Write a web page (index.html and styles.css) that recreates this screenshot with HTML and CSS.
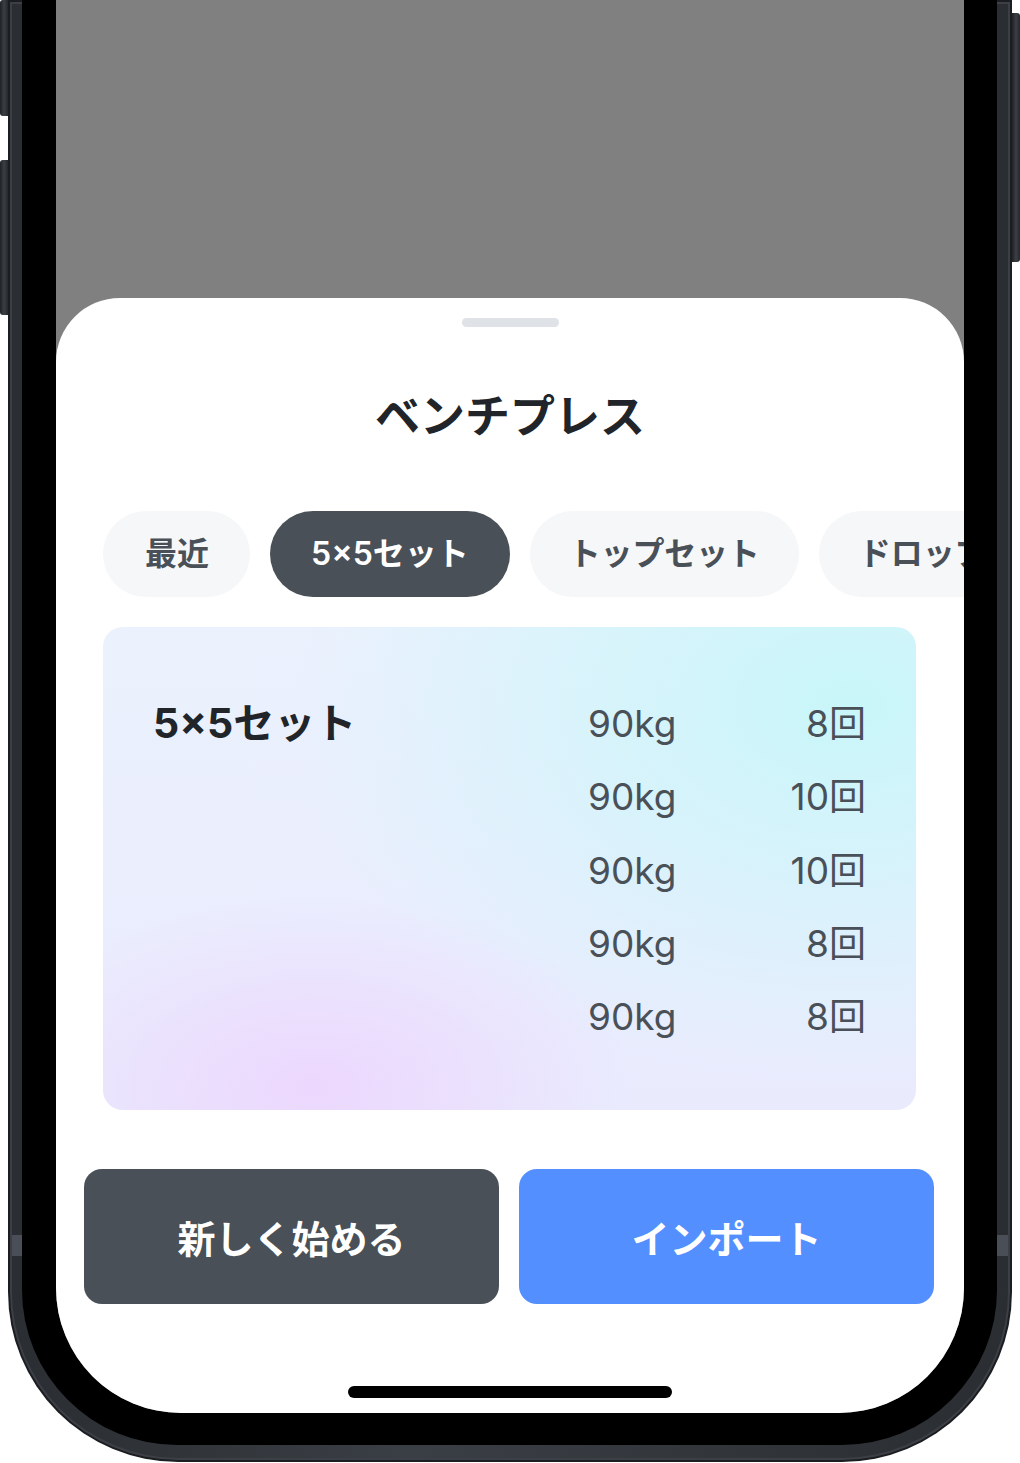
FILE: index.html
```html
<!DOCTYPE html>
<html lang="ja">
<head>
<meta charset="utf-8">
<title>ベンチプレス</title>
<link rel="stylesheet" href="styles.css">
</head>
<body>
<div class="stage">
  <div class="side side-left">
    <div class="hw-btn hw-btn-1"></div>
    <div class="hw-btn hw-btn-2"></div>
  </div>
  <div class="device">
    <div class="bezel">
      <div class="screen">
        <div class="backdrop"></div>
        <div class="sheet">
          <div class="grabber"></div>
          <h1 class="title">ベンチプレス</h1>
          <div class="chips">
            <div class="chip chip-wide">最近</div>
            <div class="chip chip-active">5×5セット</div>
            <div class="chip chip-narrow">トップセット</div>
            <div class="chip">ドロップセット</div>
          </div>
          <div class="card">
            <div class="card-title">5×5セット</div>
            <div class="sets">
              <div class="set"><span class="w">90kg</span><span class="r">8回</span></div>
              <div class="set"><span class="w">90kg</span><span class="r">10回</span></div>
              <div class="set"><span class="w">90kg</span><span class="r">10回</span></div>
              <div class="set"><span class="w">90kg</span><span class="r">8回</span></div>
              <div class="set"><span class="w">90kg</span><span class="r">8回</span></div>
            </div>
          </div>
          <div class="actions">
            <button class="btn btn-dark">新しく始める</button>
            <button class="btn btn-blue">インポート</button>
          </div>
          <div class="home-indicator"></div>
        </div>
      </div>
    </div>
  </div>
  <div class="side side-right">
    <div class="hw-btn hw-btn-3"></div>
  </div>
</div>
</body>
</html>
```
FILE: styles.css
```css
* { box-sizing: border-box; }
html, body {
  margin: 0;
  padding: 0;
  background: #ffffff;
}
body {
  width: 1020px;
  height: 1463px;
  overflow: hidden;
  font-family: "Inter", "Noto Sans CJK JP", "Noto Sans", sans-serif;
}
.stage {
  display: flex;
  align-items: flex-start;
  width: 1020px;
  height: 1463px;
}
.side {
  width: 8px;
  flex-shrink: 0;
  display: flex;
  flex-direction: column;
}
.hw-btn {
  background: linear-gradient(90deg, #1f2226, #3b4046 50%, #25282c);
}
.side-left .hw-btn { border-radius: 3px 0 0 3px; }
.side-right .hw-btn { border-radius: 0 3px 3px 0; }
.hw-btn-1 { height: 116px; }
.hw-btn-2 { height: 155px; margin-top: 44px; }
.hw-btn-3 { height: 249px; margin-top: 13px; }

.device {
  width: 1004px;
  height: 1462px;
  flex-shrink: 0;
  padding: 0 15px 17px 14px;
  border-radius: 0 0 170px 170px;
  background:
    linear-gradient(180deg, transparent 1235px, #4a4f57 1235px, #4a4f57 1256px, transparent 1256px),
    linear-gradient(90deg, #2a2d31, #3a3f45 40%, #2a2d31);
  box-shadow: inset 0 0 0 2px #1b1d20, inset 0 0 0 4px #3c4046;
}
.bezel {
  height: 100%;
  background: #000;
  padding: 0 33px 32px 34px;
  border-radius: 0 0 155px 155px;
}
.screen {
  height: 1413px;
  background: #808080;
  border-radius: 0 0 125px 125px;
  overflow: hidden;
  display: flex;
  flex-direction: column;
}
.backdrop {
  height: 298px;
  flex-shrink: 0;
}
.sheet {
  flex: 1;
  background: #ffffff;
  border-radius: 64px 64px 0 0;
  padding-top: 20px;
  display: flex;
  flex-direction: column;
  align-items: stretch;
}
.grabber {
  width: 97px;
  height: 9px;
  border-radius: 5px;
  background: #dfe2e6;
  align-self: center;
}
.title {
  margin: 60px 0 0;
  height: 60px;
  line-height: 60px;
  text-align: center;
  font-size: 45px;
  font-weight: 700;
  color: #212529;
  letter-spacing: 0;
}
.chips {
  margin-top: 64px;
  display: flex;
  gap: 20px;
  padding-left: 47px;
  overflow: hidden;
}
.chip {
  flex-shrink: 0;
  height: 86px;
  line-height: 86px;
  padding: 0 40px;
  border-radius: 43px;
  background: #f6f7f9;
  color: #495057;
  font-size: 32px;
  font-weight: 600;
  white-space: nowrap;
}
.chip-wide { padding: 0 41px 0 42px; }
.chip-narrow { padding: 0 39px 0 39px; letter-spacing: -0.2px; }
.chip-active {
  background: #495057;
  color: #ffffff;
  padding: 0 41px 0 41px;
}
.card {
  margin: 30px 48px 0 47px;
  height: 483px;
  border-radius: 20px;
  padding: 60px 50px 56px 50px;
  display: flex;
  justify-content: space-between;
  background:
    radial-gradient(ellipse 320px 190px at 26% 95%, rgba(236, 214, 253, 0.95), rgba(236, 214, 253, 0) 100%),
    radial-gradient(ellipse 560px 380px at 92% 16%, rgba(200, 246, 249, 1), rgba(200, 246, 249, 0) 100%),
    linear-gradient(180deg, #ebf1fd 0%, #e9ebfd 100%);
}
.card-title {
  font-size: 41px;
  font-weight: 700;
  color: #212529;
  line-height: 73px;
  height: 73px;
}
.sets {
  width: 278px;
  display: flex;
  flex-direction: column;
}
.set {
  height: 73.3px;
  line-height: 73.3px;
  display: flex;
  justify-content: space-between;
  font-size: 37px;
  font-weight: 400;
  color: #495057;
}
.actions {
  margin-top: 59px;
  padding: 0 30px 0 28px;
  display: flex;
  gap: 20px;
}
.btn {
  flex: 1;
  height: 135px;
  border: 0;
  border-radius: 18px;
  font-family: inherit;
  font-size: 38px;
  font-weight: 700;
  color: #ffffff;
  cursor: pointer;
}
.btn-dark { background: #495057; }
.btn-blue { background: #538ffe; }
.home-indicator {
  margin-top: 82px;
  align-self: center;
  width: 324px;
  height: 12px;
  border-radius: 6px;
  background: #000000;
}
```
